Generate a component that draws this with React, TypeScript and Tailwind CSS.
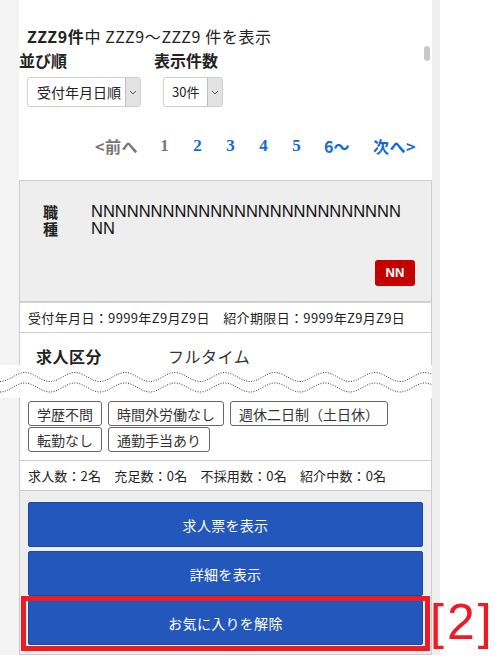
import React from "react";

function wavePath(y0: number, amp: number, period: number, width: number) {
  let d = "";
  for (let x = 0; x <= width; x += 1) {
    const y = y0 + amp * Math.cos((2 * Math.PI * x) / period);
    d += (x === 0 ? "M" : "L") + x + "," + y.toFixed(2) + " ";
  }
  return d;
}

function Chevron() {
  return (
    <svg width="8" height="5" viewBox="0 0 8 5" fill="none">
      <path d="M1 1 L4 4 L7 1" stroke="#555" strokeWidth="1" />
    </svg>
  );
}

function Tag({ children }: { children: React.ReactNode }) {
  return (
    <div className="h-[25px] px-[8px] flex items-center border-[1.5px] border-[#666] rounded-[3px] text-[14px] leading-[20px] text-[#333] bg-white">
      {children}
    </div>
  );
}

function Btn({ children }: { children: React.ReactNode }) {
  return (
    <div className="h-[45px] flex items-center justify-center bg-[#2457bb] border border-[#1d489f] rounded-[2px] text-white text-[14px] leading-[20px] tracking-[0.3px]">
      {children}
    </div>
  );
}

export default function App() {
  const num = "w-[33px] text-center font-['Liberation_Serif',serif] font-bold text-[17px] leading-[20px]";
  return (
    <div className="relative w-[499px] h-[655px] flex bg-white overflow-hidden font-['Noto_Sans_CJK_JP',sans-serif] text-[#222]">
      <div className="w-[19px] bg-[#f3f3f3]" />
      <div className="w-[413px] flex flex-col">
        <div className="pt-[26px] pl-[8px] text-[16px] leading-[20px] tracking-[0.6px] text-[#222]">
          <span className="font-bold">ZZZ9件</span>中 ZZZ9～ZZZ9 件を表示
        </div>
        <div className="flex mt-[6px]">
          <div className="w-[135px]">
            <div className="text-[16px] leading-[16px] font-bold">並び順</div>
            <div className="ml-[8px] mt-[9px] w-[114px] h-[30px] flex border border-[#cfcfcf] rounded-[3px] bg-white overflow-hidden">
              <div className="flex-1 pl-[9px] flex items-center text-[14px] leading-[20px]">受付年月日順</div>
              <div className="w-[15px] flex items-center justify-center bg-[#e3e3e3] border-l border-[#bdbdbd]">
                <Chevron />
              </div>
            </div>
          </div>
          <div>
            <div className="text-[16px] leading-[16px] font-bold">表示件数</div>
            <div className="ml-[9px] mt-[9px] w-[60px] h-[30px] flex border border-[#cfcfcf] rounded-[3px] bg-white overflow-hidden">
              <div className="flex-1 pl-[8px] flex items-center text-[13px] leading-[20px]">30件</div>
              <div className="w-[15px] flex items-center justify-center bg-[#e3e3e3] border-l border-[#bdbdbd]">
                <Chevron />
              </div>
            </div>
          </div>
        </div>
        <div className="flex items-center mt-[29px] mb-[24px] pl-[76px] h-[20px]">
          <div className="w-[53px] text-[16px] leading-[20px] font-bold text-[#777] tracking-[0.5px]">&lt;前へ</div>
          <div className={num + " text-[#777]"}>1</div>
          <div className={num + " text-[#1469d6]"}>2</div>
          <div className={num + " text-[#1469d6]"}>3</div>
          <div className={num + " text-[#1469d6]"}>4</div>
          <div className={num + " text-[#1469d6]"}>5</div>
          <div className="ml-[11px] w-[49px] text-[16px] leading-[20px] font-bold text-[#1469d6]">6～</div>
          <div className="text-[16px] leading-[20px] font-bold text-[#1469d6] tracking-[0.5px]">次へ&gt;</div>
        </div>
        <div className="flex-1 border border-[#cccccc] flex flex-col">
          <div className="bg-[#eeeeee] h-[122px] border-b-2 border-[#d0d0d0] flex flex-col pt-[22px]">
            <div className="flex">
              <div className="ml-[23px] w-[17px] font-bold text-[15px] leading-[17px] text-[#222]">
                職<br />種
              </div>
              <div className="ml-[31px] w-[314px] font-['Liberation_Sans',sans-serif] text-[16.5px] leading-[17px] text-[#111] break-all">
                NNNNNNNNNNNNNNNNNNNNNNNNNNNN
              </div>
            </div>
            <div className="flex justify-end pr-[16px] mt-auto mb-[15px]">
              <div className="w-[40px] h-[26px] rounded-[3px] bg-[#c40000] text-white font-bold text-[13px] flex items-center justify-center font-['Liberation_Sans',sans-serif]">
                NN
              </div>
            </div>
          </div>
          <div className="h-[30px] flex items-center pl-[8px] text-[13px] leading-[18px] tracking-[0.35px] border-b border-[#cccccc]">
            受付年月日：9999年Z9月Z9日　紹介期限日：9999年Z9月Z9日
          </div>
          <div className="pt-[13px] pb-[8px]">
            <div className="flex h-[20px] items-center text-[16px] leading-[20px]">
              <div className="ml-[16px] w-[132px] font-bold tracking-[0.5px]">求人区分</div>
              <div className="text-[#333] tracking-[0.5px]">フルタイム</div>
            </div>
            <div className="h-[35px]" />
            <div className="flex flex-wrap gap-x-[6px] gap-y-[1px] pl-[8px] pr-[30px]">
              <Tag>学歴不問</Tag>
              <Tag>時間外労働なし</Tag>
              <Tag>週休二日制（土日休）</Tag>
              <Tag>転勤なし</Tag>
              <Tag>通勤手当あり</Tag>
            </div>
          </div>
          <div className="h-[31px] flex items-center pl-[8px] text-[13px] leading-[18px] tracking-[0.15px] border-t border-b border-[#cccccc]">
            求人数：2名　充足数：0名　不採用数：0名　紹介中数：0名
          </div>
          <div className="flex-1 bg-[#eeeeee] px-[8px] pt-[11px] flex flex-col gap-[4px]">
            <Btn>求人票を表示</Btn>
            <Btn>詳細を表示</Btn>
            <Btn>お気に入りを解除</Btn>
          </div>
        </div>
      </div>
      <div className="w-[8px] bg-[#efefef]" />
      <div className="flex-1 bg-white" />

      <div className="absolute left-[424px] top-[46px] w-[6px] h-[15px] rounded-[3px] bg-[#c8c8c8]" />

      <div className="absolute left-0 top-[365px] w-[432px] h-[33px] bg-white">
        <svg width="432" height="33" viewBox="0 0 432 33">
          <path d={wavePath(12, 4.5, 50, 432)} fill="none" stroke="#000" strokeWidth="0.8" strokeDasharray="1 1.5" />
          <path d={wavePath(22.5, 4.5, 50, 432)} fill="none" stroke="#000" strokeWidth="0.8" strokeDasharray="1 1.5" />
        </svg>
      </div>

      <div className="absolute left-[21px] top-[596px] w-[409px] h-[55px] border-[5px] border-[#ec1c24]" />
      <div className="absolute left-[430px] top-[593px] text-[50px] leading-[58px] tracking-[3px] text-[#ec1c24] font-['Liberation_Sans',sans-serif]">
        [2]
      </div>
    </div>
  );
}
